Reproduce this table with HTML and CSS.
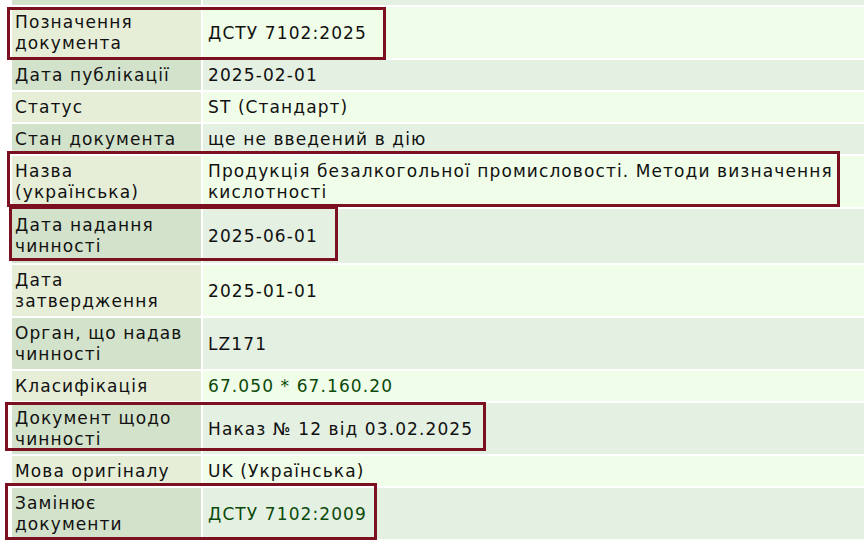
FILE: index.html
```html
<!DOCTYPE html>
<html lang="uk">
<head>
    <meta charset="UTF-8">
    <title>ДСТУ 7102:2025</title>
    <link rel="stylesheet" href="styles.css">
</head>
<body>

<div id="page">
    <table id="card">
        <tr class="dark">
            <td class="name">Тип</td>
            <td class="val">Вітчизняна нова норма</td>
        </tr>
        <tr>
            <td class="name">Позначення документа</td>
            <td class="val">ДСТУ 7102:2025</td>
        </tr>
        <tr class="dark">
            <td class="name">Дата публікації</td>
            <td class="val">2025-02-01</td>
        </tr>
        <tr>
            <td class="name">Статус</td>
            <td class="val">ST (Стандарт)</td>
        </tr>
        <tr class="dark">
            <td class="name">Стан документа</td>
            <td class="val">ще не введений в дію</td>
        </tr>
        <tr>
            <td class="name">Назва (українська)</td>
            <td class="val">Продукція безалкогольної промисловості. Методи визначення кислотності</td>
        </tr>
        <tr class="dark tall">
            <td class="name">Дата надання чинності</td>
            <td class="val">2025-06-01</td>
        </tr>
        <tr>
            <td class="name">Дата затвердження</td>
            <td class="val">2025-01-01</td>
        </tr>
        <tr class="dark">
            <td class="name">Орган, що надав чинності</td>
            <td class="val">LZ171</td>
        </tr>
        <tr>
            <td class="name">Класифікація</td>
            <td class="val"><a href="#">67.050 * 67.160.20</a></td>
        </tr>
        <tr class="dark">
            <td class="name">Документ щодо чинності</td>
            <td class="val">Наказ № 12 від 03.02.2025</td>
        </tr>
        <tr>
            <td class="name">Мова оригіналу</td>
            <td class="val">UK (Українська)</td>
        </tr>
        <tr class="dark">
            <td class="name">Замінює документи</td>
            <td class="val"><a href="#">ДСТУ 7102:2009</a></td>
        </tr>
    </table>

    <!-- позначки -->
    <div class="mark" id="m1"></div>
    <div class="mark" id="m2"></div>
    <div class="mark" id="m3"></div>
    <div class="mark" id="m4"></div>
    <div class="mark" id="m5"></div>
</div>

</body>
</html>
```

FILE: styles.css
```css
*{
    margin: 0;
    padding: 0;
}
a{
    text-decoration: none;
    color: #0b4a0b;
}
body{
    font-family: "DejaVu Sans", Verdana, sans-serif;
    font-size: 17px;
    letter-spacing: 1.1px;
    line-height: 21px;
    color: #111;
    background: #fff;
    overflow: hidden;
}

#page{
    position: relative;
    padding-left: 10px;
    height: 542px;
    overflow: hidden;
}
#card{
    border-collapse: separate;
    border-spacing: 2px;
    margin-top: -27px;
    width: 880px;
}
#card td{
    padding: 5px 3px 4px;
    vertical-align: middle;
}
#card .tall td{
    padding-top: 6px;
    padding-bottom: 6px;
}
#card .name{
    width: 183px;
    background: #e6eed8;
}
#card .val{
    padding-left: 5px;
    padding-right: 30px;
    background: #f0fde8;
}
#card .dark .name{
    background: #d3e2cb;
}
#card .dark .val{
    background: #e4f0e2;
}

.mark{
    position: absolute;
    border: 3px solid #7a1020;
}
#m1{
    left: 7px;
    top: 7px;
    width: 373px;
    height: 47px;
}
#m2{
    left: 7px;
    top: 151px;
    width: 827px;
    height: 50px;
}
#m3{
    left: 9px;
    top: 206px;
    width: 323px;
    height: 49px;
}
#m4{
    left: 5px;
    top: 402px;
    width: 475px;
    height: 43px;
}
#m5{
    left: 5px;
    top: 483px;
    width: 366px;
    height: 51px;
}
```
